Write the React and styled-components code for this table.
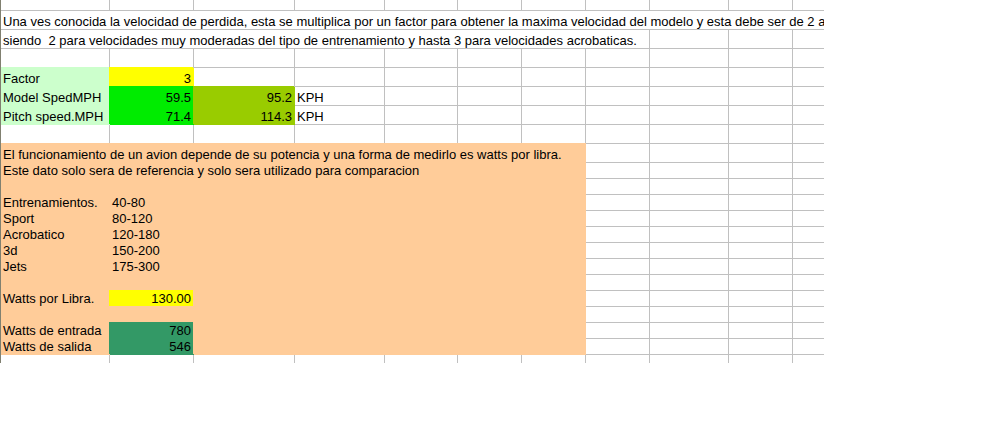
import React from "react";
import styled, { createGlobalStyle } from "styled-components";

const GRID = "#c0c0c0";
const TAN = "#ffcc99";
const PALE = "#ccffcc";
const YELLOW = "#ffff00";
const GREEN = "#00ec00";
const LIME = "#99cc00";
const SEA = "#339966";

const GlobalStyle = createGlobalStyle`
  html, body {
    margin: 0;
    padding: 0;
    background: #ffffff;
  }
  body {
    font-family: "Liberation Sans", Arial, sans-serif;
    font-size: 13px;
    color: #000000;
  }
`;

// spreadsheet viewport, cropped on the right like the window was
const Sheet = styled.div`
  width: 823px;
  border-left: 1px solid #808070;
  overflow: hidden;
`;

const Row = styled.div`
  display: grid;
  grid-template-columns: 109px 84px 101px 90px 73px 64px 64px 64px 79px 64px 64px;
  height: ${(p) => p.$h}px;
`;

const Cell = styled.div`
  grid-column: span ${(p) => p.$span || 1};
  display: flex;
  align-items: flex-end;
  justify-content: ${(p) => (p.$right ? "flex-end" : "flex-start")};
  padding: 0 2px 1px;
  line-height: 13px;
  white-space: pre;
  background: ${(p) => p.$bg || "transparent"};
  border-right: 1px solid ${(p) => p.$bg || GRID};
  border-bottom: 1px solid ${(p) => p.$bg || GRID};
  box-shadow: ${(p) =>
    p.$bg ? `${p.$edge ? 0 : -1}px -1px 0 0 ${p.$bg}` : "none"};
`;

const blanks = (n) => Array.from({ length: n }, () => ({}));

const rows = [
  { h: 11, cells: blanks(11) },
  {
    h: 19,
    cells: [
      {
        span: 11,
        text: "Una ves conocida la velocidad de perdida, esta se multiplica por un factor para obtener la maxima velocidad del modelo y esta debe ser de 2 a",
      },
    ],
  },
  {
    h: 19,
    cells: [
      {
        span: 8,
        text: "siendo  2 para velocidades muy moderadas del tipo de entrenamiento y hasta 3 para velocidades acrobaticas.",
      },
      ...blanks(3),
    ],
  },
  { h: 19, cells: blanks(11) },
  {
    h: 19,
    cells: [
      { text: "Factor", bg: PALE },
      { text: "3", bg: YELLOW, right: true },
      ...blanks(9),
    ],
  },
  {
    h: 19,
    cells: [
      { text: "Model SpedMPH", bg: PALE },
      { text: "59.5", bg: GREEN, right: true },
      { text: "95.2", bg: LIME, right: true },
      { text: "KPH" },
      ...blanks(7),
    ],
  },
  {
    h: 19,
    cells: [
      { text: "Pitch speed.MPH", bg: PALE },
      { text: "71.4", bg: GREEN, right: true },
      { text: "114.3", bg: LIME, right: true },
      { text: "KPH" },
      ...blanks(7),
    ],
  },
  { h: 19, cells: blanks(11) },
  {
    h: 19,
    cells: [
      {
        span: 7,
        bg: TAN,
        text: "El funcionamiento de un avion depende de su potencia y una forma de medirlo es watts por libra.",
      },
      ...blanks(4),
    ],
  },
  {
    h: 16,
    cells: [
      {
        span: 7,
        bg: TAN,
        text: "Este dato solo sera de referencia y solo sera utilizado para comparacion",
      },
      ...blanks(4),
    ],
  },
  { h: 16, cells: [{ span: 7, bg: TAN }, ...blanks(4)] },
  ...[
    ["Entrenamientos.", "40-80"],
    ["Sport", "80-120"],
    ["Acrobatico", "120-180"],
    ["3d", "150-200"],
    ["Jets", "175-300"],
  ].map(([label, range]) => ({
    h: 16,
    cells: [
      { text: label, bg: TAN },
      { text: range, bg: TAN },
      { span: 5, bg: TAN },
      ...blanks(4),
    ],
  })),
  { h: 16, cells: [{ span: 7, bg: TAN }, ...blanks(4)] },
  {
    h: 16,
    cells: [
      { text: "Watts por Libra.", bg: TAN },
      { text: "130.00", bg: YELLOW, right: true },
      { span: 5, bg: TAN },
      ...blanks(4),
    ],
  },
  { h: 16, cells: [{ span: 7, bg: TAN }, ...blanks(4)] },
  {
    h: 16,
    cells: [
      { text: "Watts de entrada", bg: TAN },
      { text: "780", bg: SEA, right: true },
      { span: 5, bg: TAN },
      ...blanks(4),
    ],
  },
  {
    h: 16,
    cells: [
      { text: "Watts de salida", bg: TAN },
      { text: "546", bg: SEA, right: true },
      { span: 5, bg: TAN },
      ...blanks(4),
    ],
  },
  { h: 8, cells: blanks(11).map((c) => ({ ...c, open: true })) },
];

const App = () => {
  return (
    <>
      <GlobalStyle />
      <Sheet>
        {rows.map((row, r) => (
          <Row key={r} $h={row.h}>
            {row.cells.map((c, i) => (
              <Cell
                key={i}
                $span={c.span}
                $bg={c.bg}
                $right={c.right}
                $edge={i === 0}
                style={c.open ? { borderBottom: "none" } : undefined}
              >
                {c.text}
              </Cell>
            ))}
          </Row>
        ))}
      </Sheet>
    </>
  );
};

export default App;
